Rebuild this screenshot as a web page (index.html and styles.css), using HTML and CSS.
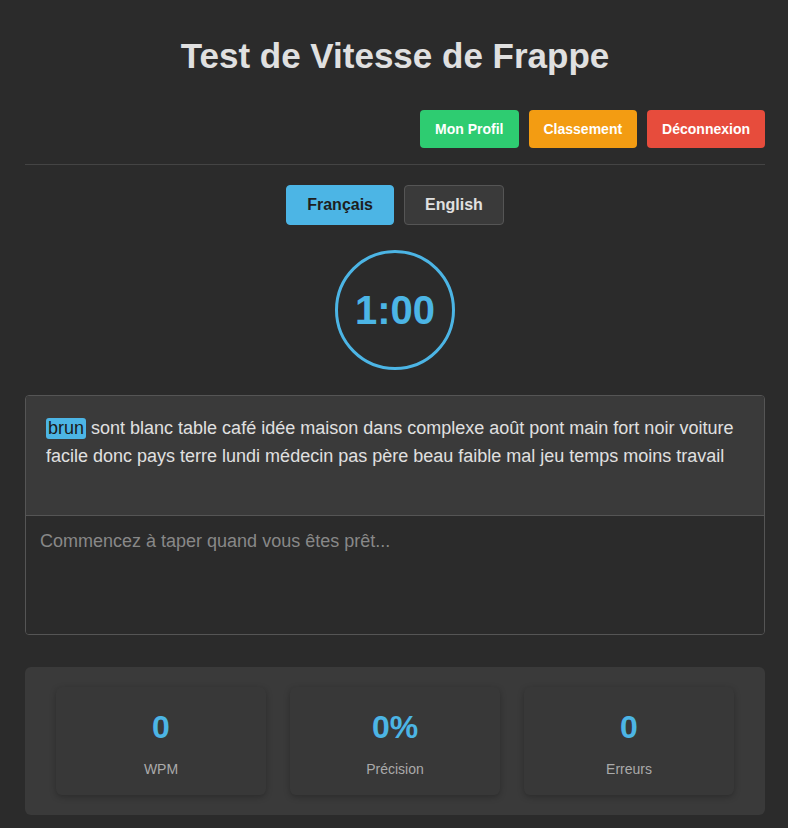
FILE: index.html
```html
<!DOCTYPE html>
<html lang="fr">
<head>
<meta charset="utf-8">
<title>Test de Vitesse de Frappe</title>
<link rel="stylesheet" href="styles.css">
</head>
<body>
<div class="container">
  <h1 class="title">Test de Vitesse de Frappe</h1>
  <div class="nav">
    <button class="nav-btn green">Mon Profil</button>
    <button class="nav-btn orange">Classement</button>
    <button class="nav-btn red">Déconnexion</button>
  </div>
  <div class="langs">
    <button class="lang-btn active">Français</button>
    <button class="lang-btn">English</button>
  </div>
  <div class="timer-wrap">
    <div class="timer">1:00</div>
  </div>
  <div class="typing-box">
    <div class="text-display"><span class="current">brun</span> sont blanc table café idée maison dans complexe août pont main fort noir voiture facile donc pays terre lundi médecin pas père beau faible mal jeu temps moins travail</div>
    <textarea class="input" placeholder="Commencez à taper quand vous êtes prêt..."></textarea>
  </div>
  <div class="stats">
    <div class="stat"><div class="stat-value">0</div><div class="stat-label">WPM</div></div>
    <div class="stat"><div class="stat-value">0%</div><div class="stat-label">Précision</div></div>
    <div class="stat"><div class="stat-value">0</div><div class="stat-label">Erreurs</div></div>
  </div>
</div>
</body>
</html>
```
FILE: styles.css
```css
* { box-sizing: border-box; }
html, body {
  margin: 0;
  padding: 0;
  background: #2b2b2b;
  color: #e0e0e0;
  font-family: "Liberation Sans", Arial, sans-serif;
}
.container {
  padding: 0 23px 20px 25px;
}
.title {
  margin: 0;
  padding-top: 36px;
  font-size: 35px;
  font-weight: bold;
  text-align: center;
  color: #e0e0e0;
  line-height: 40px;
}
.nav {
  display: flex;
  justify-content: flex-end;
  gap: 10px;
  margin-top: 34px;
  padding-bottom: 16px;
  border-bottom: 1px solid #444;
}
.nav-btn {
  border: none;
  border-radius: 4px;
  color: #fff;
  font-family: inherit;
  font-weight: bold;
  font-size: 14px;
  line-height: 16px;
  padding: 11px 15px;
}
.green { background: #2ecc71; }
.orange { background: #f39c12; }
.red { background: #e74c3c; }
.langs {
  display: flex;
  justify-content: center;
  gap: 10px;
  margin-top: 20px;
}
.lang-btn {
  font-family: inherit;
  font-weight: bold;
  font-size: 16px;
  line-height: 18px;
  padding: 10px 20px;
  border: 1px solid #555;
  border-radius: 4px;
  background: #3a3a3a;
  color: #e0e0e0;
}
.lang-btn.active {
  background: #4cb5e5;
  border-color: #4cb5e5;
  color: #1e1e1e;
}
.timer-wrap {
  display: flex;
  justify-content: center;
  margin-top: 25px;
}
.timer {
  width: 120px;
  height: 120px;
  border: 3px solid #4cb5e5;
  border-radius: 50%;
  display: flex;
  align-items: center;
  justify-content: center;
  color: #4cb5e5;
  font-size: 40px;
  font-weight: bold;
}
.typing-box {
  margin-top: 25px;
  border: 1px solid #555;
  border-radius: 4px;
  overflow: hidden;
}
.text-display {
  background: #3a3a3a;
  padding: 18px 20px 20px;
  min-height: 120px;
  font-size: 18px;
  line-height: 28px;
  color: #e0e0e0;
  border-bottom: 1px solid #555;
}
.current {
  display: inline-block;
  line-height: 21px;
  background: #4cb5e5;
  color: #1a1a1a;
  border-radius: 3px;
  padding: 0 2px;
}
.input {
  display: block;
  width: 100%;
  height: 118px;
  margin: 0;
  border: none;
  outline: none;
  resize: none;
  background: #2b2b2b;
  color: #e0e0e0;
  padding: 15px 14px;
  font-family: inherit;
  font-size: 18px;
  line-height: 21px;
}
.input::placeholder { color: #888; }
.stats {
  margin-top: 32px;
  background: #3a3a3a;
  border-radius: 6px;
  padding: 20px 31px 20px;
  display: grid;
  grid-template-columns: repeat(3, 210px);
  justify-content: space-between;
}
.stat {
  background: #383838;
  border-radius: 6px;
  box-shadow: 0 2px 6px rgba(0,0,0,0.25);
  height: 108px;
  padding-top: 22px;
  text-align: center;
}
.stat-value {
  color: #4cb5e5;
  font-size: 32px;
  font-weight: bold;
  line-height: 37px;
}
.stat-label {
  margin-top: 15px;
  color: #aaa;
  font-size: 14px;
  line-height: 16px;
}
```
